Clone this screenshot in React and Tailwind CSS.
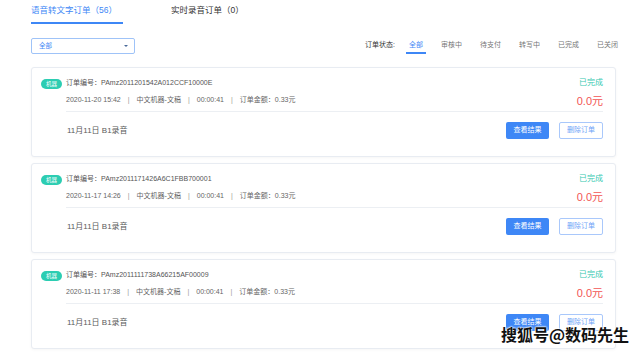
import React from 'react';

const orders = [
    { no: 'PAmz2011201542A012CCF10000E', time: '2020-11-20 15:42' },
    { no: 'PAmz2011171426A6C1FBB700001', time: '2020-11-17 14:26' },
    { no: 'PAmz2011111738A66215AF00009', time: '2020-11-11 17:38' },
];

const statuses = ['全部', '审核中', '待支付', '转写中', '已完成', '已关闭'];

function Sep() {
    return <span className="mx-[7px] text-[#999]">|</span>;
}

function OrderCard({ order }) {
    return (
        <div className="h-[90px] shrink-0 bg-white border border-[#e8ecf2] rounded-[3px] shadow-[0_1px_3px_rgba(0,0,0,0.04)] flex pl-[9px] pr-[12px] pt-[9px]">
            <div className="mt-[2px] w-[21px] h-[10px] rounded-full bg-[#2ccdb2] text-white text-[5.5px] leading-[10px] text-center shrink-0">机器</div>
            <div className="ml-[4px] flex-1 flex flex-col">
                <div className="h-[35px] flex justify-between border-b border-[#eceff3]">
                    <div className="flex flex-col text-[7px] leading-[12px]">
                        <div className="text-[#555]">订单编号：{order.no}</div>
                        <div className="mt-[5px] text-[#666] flex">
                            <span>{order.time}</span>
                            <Sep />
                            <span>中文机器-文稿</span>
                            <Sep />
                            <span>00:00:41</span>
                            <Sep />
                            <span>订单金额：0.33元</span>
                        </div>
                    </div>
                    <div className="flex flex-col items-end">
                        <div className="text-[8px] leading-[12px] text-[#38c9b1]">已完成</div>
                        <div className="mt-[4px] text-[11px] leading-[16px] text-[#f25454]">0.0元</div>
                    </div>
                </div>
                <div className="flex justify-between items-center pt-[10px]">
                    <div className="text-[8px] text-[#5a5a5a] pl-[1px]">11月11日 B1录音</div>
                    <div className="flex gap-[10px]">
                        <button className="w-[43px] h-[17px] rounded-[2px] bg-[#3e87f6] text-white text-[7px]">查看结果</button>
                        <button className="w-[44px] h-[17px] rounded-[2px] border border-[#a9c8fb] bg-white text-[#6fa3f7] text-[7px]">删除订单</button>
                    </div>
                </div>
            </div>
        </div>
    );
}

export default function App() {
    return (
        <div className="relative w-[640px] h-[353px] overflow-hidden bg-white font-['Liberation_Sans','Noto_Sans_CJK_SC',sans-serif]">
            <div className="pl-[31px] pr-[24px]">
                <div className="flex">
                    <div className="pt-[4px] pb-[6px] pr-[6px] border-b-2 border-[#3e87f6] text-[8.5px] leading-[12px] text-[#3e87f6]">语音转文字订单（56）</div>
                    <div className="ml-[48px] pt-[4px] text-[8.5px] leading-[12px] text-[#333]">实时录音订单（0）</div>
                </div>

                <div className="mt-[14px] flex justify-between items-start">
                    <div className="w-[104px] h-[16px] border border-[#9fc3f8] rounded-[2px] flex items-center justify-between pl-[7px] pr-[6px]">
                        <span className="text-[6.5px] text-[#3e87f6]">全部</span>
                        <span className="w-0 h-0 border-l-[2px] border-r-[2px] border-t-[2px] border-l-transparent border-r-transparent border-t-[#4a6a9a]" />
                    </div>
                    <div className="flex items-start text-[7px] mr-[-2px]">
                        <span className="h-[16px] leading-[14px] text-[#333] mr-[11px]">订单状态:</span>
                        {statuses.map((s, i) => (
                            <span
                                key={s}
                                className={i === 0
                                    ? 'h-[16px] leading-[14px] px-[3px] border-b-2 border-[#3e87f6] text-[#3e87f6] mr-[15px]'
                                    : 'h-[16px] leading-[14px] text-[#777] mr-[18px] last:mr-0'}
                            >{s}</span>
                        ))}
                    </div>
                </div>

                <div className="mt-[13px] flex flex-col gap-[6px]">
                    {orders.map(o => <OrderCard key={o.no} order={o} />)}
                </div>
            </div>

            <div className="absolute left-[501px] top-[324px] text-[16px] leading-[20px] font-bold text-[#111] font-['Noto_Sans_CJK_SC',sans-serif] [text-shadow:0_0_2px_#fff,0_0_2px_#fff,0_0_2px_#fff]">搜狐号@数码先生</div>
        </div>
    );
}
